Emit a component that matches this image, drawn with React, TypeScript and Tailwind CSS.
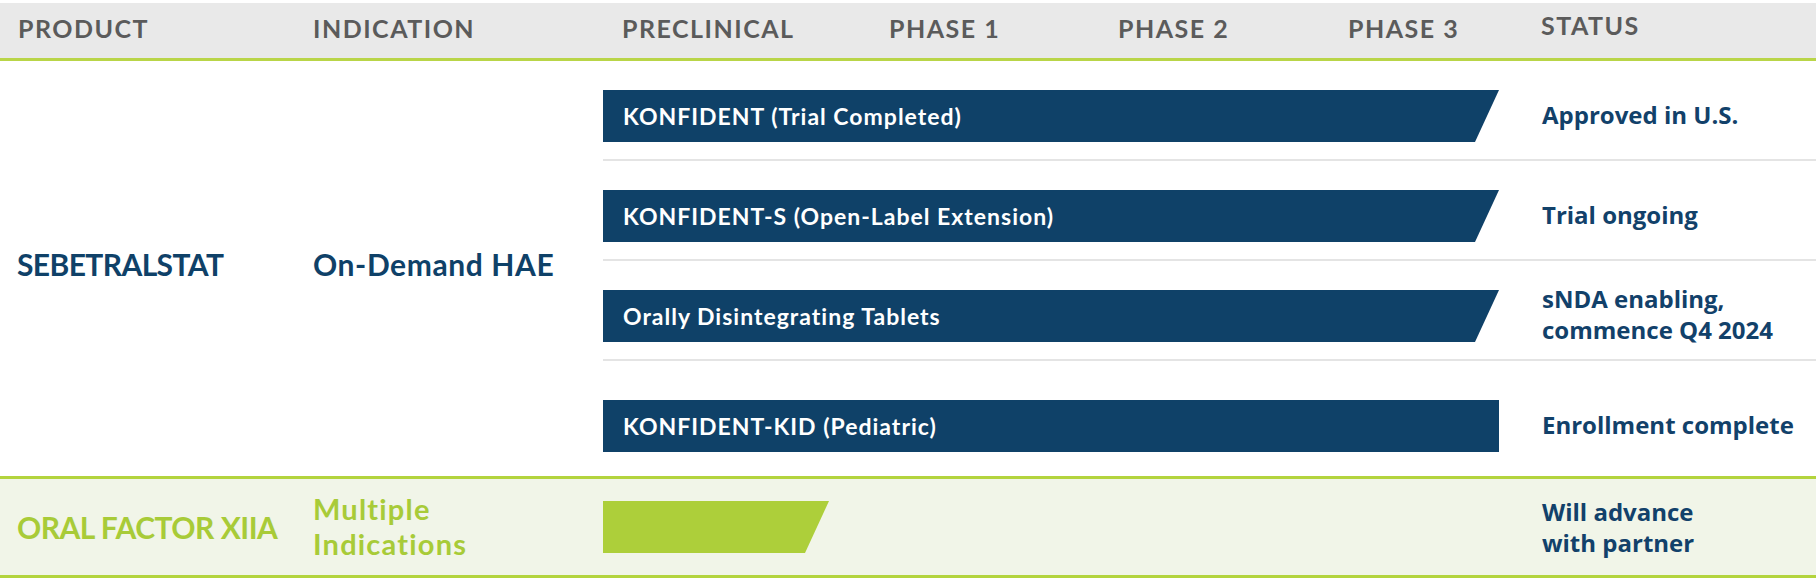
import React from "react";

const navy = "text-[#0f4168]";

const trials = [
  { name: "KONFIDENT (Trial Completed)", status: ["Approved in U.S."], slant: true },
  { name: "KONFIDENT-S (Open-Label Extension)", status: ["Trial ongoing"], slant: true },
  { name: "Orally Disintegrating Tablets", status: ["sNDA enabling,", "commence Q4 2024"], slant: true },
  { name: "KONFIDENT-KID (Pediatric)", status: ["Enrollment complete"], slant: false },
];

const heading = "font-['Lato',sans-serif] font-bold uppercase text-[25px] tracking-[1.5px] text-[#5b5b5b]";
const status = "font-['Open_Sans',sans-serif] font-bold text-[24px] leading-[31px] text-[#12416a]";

function Header() {
  return (
    <div className="flex items-center h-[58px] pb-[4px] mt-[3px] bg-[#e9e9e9] border-b-[3px] border-[#b9d548]">
      <div className={`w-[313px] pl-[18px] ${heading}`}>Product</div>
      <div className={`w-[290px] ${heading}`}>Indication</div>
      <div className="w-[938px] grid grid-cols-[286px_229px_230px_1fr]">
        <div className={`pl-[19px] ${heading}`}>Preclinical</div>
        <div className={heading}>Phase 1</div>
        <div className={heading}>Phase 2</div>
        <div className={heading}>Phase 3</div>
      </div>
      <div className={`-mt-[6px] ${heading}`}>Status</div>
    </div>
  );
}

function TrialRow({ trial, last }: { trial: (typeof trials)[number]; last: boolean }) {
  return (
    <div
      className={`flex items-center ${
        last ? "pt-[39px] pb-[24px]" : "pt-[29px] pb-[17px] border-b-2 border-[#e4e4e4]"
      }`}
    >
      <div
        className={`w-[896px] h-[52px] flex items-center pl-[20px] bg-[#0f4168] text-white font-['Lato',sans-serif] font-bold text-[23px] tracking-[1px] ${
          trial.slant ? "[clip-path:polygon(0_0,100%_0,calc(100%-24px)_100%,0_100%)]" : ""
        }`}
      >
        {trial.name}
      </div>
      <div className={`h-[52px] -mt-[4px] pl-[43px] flex flex-col justify-center ${status}`}>
        {trial.status.map((line) => (
          <div key={line}>{line}</div>
        ))}
      </div>
    </div>
  );
}

export default function App() {
  return (
    <div className="w-[1816px] bg-white">
      <Header />

      <div className="flex">
        <div className={`w-[313px] pl-[17px] pb-[9px] flex items-center font-['Lato',sans-serif] font-bold text-[30px] tracking-[-0.6px] ${navy}`}>
          SEBETRALSTAT
        </div>
        <div className={`w-[287px] pb-[9px] flex items-center font-['Lato',sans-serif] font-bold text-[30px] tracking-[0.6px] ${navy}`}>
          On-Demand HAE
        </div>
        <div className="flex-1 pl-[3px]">
          {trials.map((t, i) => (
            <TrialRow key={t.name} trial={t} last={i === trials.length - 1} />
          ))}
        </div>
      </div>

      <div className="flex items-center h-[102px] bg-[#f1f5e8] border-y-[3px] border-[#b3d43d]">
        <div className="w-[313px] pl-[17px] font-['Lato',sans-serif] font-bold text-[30px] tracking-[-0.5px] text-[#a8cb38]">
          ORAL FACTOR XIIA
        </div>
        <div className="w-[290px] -mt-[2px] font-['Lato',sans-serif] font-bold text-[29px] leading-[35px] tracking-[1.2px] text-[#a8cb38]">
          <div>Multiple</div>
          <div>Indications</div>
        </div>
        <div className="w-[896px]">
          <div className="w-[226px] h-[52px] bg-[#adcf3a] [clip-path:polygon(0_0,100%_0,calc(100%-24px)_100%,0_100%)]" />
        </div>
        <div className={`pl-[43px] ${status}`}>
          <div>Will advance</div>
          <div>with partner</div>
        </div>
      </div>
    </div>
  );
}
